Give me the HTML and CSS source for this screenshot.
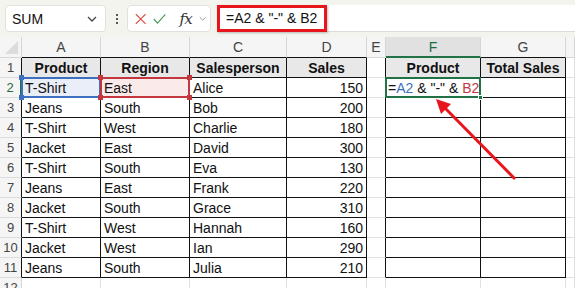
FILE: index.html
```html
<!DOCTYPE html>
<html lang="en">
<head>
    <meta charset="UTF-8">
    <title>Concatenate in Excel</title>
    <link rel="stylesheet" href="styles.css">
</head>
<body>
    <div class="ribbon">
        <div class="namebox">
            <span>SUM</span>
            <svg width="10" height="6" viewBox="0 0 10 6"><path d="M1 1 L5 5 L9 1" fill="none" stroke="#444" stroke-width="1.3"/></svg>
        </div>
        <div class="dots"><i></i><i></i><i></i></div>
        <div class="fnbox">
            <svg width="14" height="14" viewBox="0 0 14 14"><path d="M1 1 L13 13 M13 1 L1 13" stroke="#d9453c" stroke-width="1.4"/></svg>
            <svg width="16" height="14" viewBox="0 0 16 14"><path d="M1 7 L5.5 12 L15 1.5" fill="none" stroke="#4c9a5a" stroke-width="1.4"/></svg>
            <span class="fx">fx</span>
            <svg width="9" height="6" viewBox="0 0 9 6"><path d="M1 1 L4.5 4.5 L8 1" fill="none" stroke="#999" stroke-width="1.2"/></svg>
        </div>
        <div class="formula">
            <span class="mark">=A2 &amp; "-" &amp; B2</span>
        </div>
    </div>

    <table class="grid">
        <colgroup>
            <col style="width:22px"><col style="width:79px"><col style="width:89px"><col style="width:97px">
            <col style="width:80px"><col style="width:19px"><col style="width:95px"><col style="width:85px"><col>
        </colgroup>
        <tr class="letters">
            <th class="corner"><span></span></th>
            <th class="top">A</th><th class="top">B</th><th class="top">C</th><th class="top">D</th>
            <th>E</th><th class="top active">F</th><th class="top">G</th><th></th>
        </tr>
        <tr>
            <th class="rh">1</th>
            <td class="t hd">Product</td><td class="t hd">Region</td><td class="t hd">Salesperson</td><td class="t hd">Sales</td>
            <td class="e"></td><td class="t hd">Product</td><td class="t hd">Total Sales</td><td></td>
        </tr>
        <tr>
            <th class="rh sel">2</th>
            <td class="t refa"><b class="h tl"></b><b class="h bl"></b>T-Shirt</td>
            <td class="t refb"><b class="h tl"></b><b class="h tr"></b><b class="h bl"></b><b class="h br"></b>East</td>
            <td class="t">Alice</td><td class="t n">150</td>
            <td class="e"></td>
            <td class="t edit">=<span class="ra">A2</span> &amp; "-" &amp; <span class="rb">B2</span><b class="fill"></b></td>
            <td class="t"></td><td></td>
        </tr>
        <tr>
            <th class="rh">3</th>
            <td class="t">Jeans</td><td class="t">South</td><td class="t">Bob</td><td class="t n">200</td>
            <td class="e"></td><td class="t"></td><td class="t"></td><td></td>
        </tr>
        <tr>
            <th class="rh">4</th>
            <td class="t">T-Shirt</td><td class="t">West</td><td class="t">Charlie</td><td class="t n">180</td>
            <td class="e"></td><td class="t"></td><td class="t"></td><td></td>
        </tr>
        <tr>
            <th class="rh">5</th>
            <td class="t">Jacket</td><td class="t">East</td><td class="t">David</td><td class="t n">300</td>
            <td class="e"></td><td class="t"></td><td class="t"></td><td></td>
        </tr>
        <tr>
            <th class="rh">6</th>
            <td class="t">T-Shirt</td><td class="t">South</td><td class="t">Eva</td><td class="t n">130</td>
            <td class="e"></td><td class="t"></td><td class="t"></td><td></td>
        </tr>
        <tr>
            <th class="rh">7</th>
            <td class="t">Jeans</td><td class="t">East</td><td class="t">Frank</td><td class="t n">220</td>
            <td class="e"></td><td class="t"></td><td class="t"></td><td></td>
        </tr>
        <tr>
            <th class="rh">8</th>
            <td class="t">Jacket</td><td class="t">South</td><td class="t">Grace</td><td class="t n">310</td>
            <td class="e"></td><td class="t"></td><td class="t"></td><td></td>
        </tr>
        <tr>
            <th class="rh">9</th>
            <td class="t">T-Shirt</td><td class="t">West</td><td class="t">Hannah</td><td class="t n">160</td>
            <td class="e"></td><td class="t"></td><td class="t"></td><td></td>
        </tr>
        <tr>
            <th class="rh">10</th>
            <td class="t">Jacket</td><td class="t">West</td><td class="t">Ian</td><td class="t n">290</td>
            <td class="e"></td><td class="t"></td><td class="t"></td><td></td>
        </tr>
        <tr>
            <th class="rh">11</th>
            <td class="t">Jeans</td><td class="t">South</td><td class="t">Julia</td><td class="t n">210</td>
            <td class="e"></td><td class="t"></td><td class="t"></td><td></td>
        </tr>
        <tr>
            <th class="rh last">12</th>
            <td></td><td></td><td></td><td></td><td></td><td></td><td></td><td></td>
        </tr>
    </table>

    <svg class="arrow" width="575" height="288" viewBox="0 0 575 288">
        <line x1="515" y1="179" x2="444" y2="107" stroke="#e8161c" stroke-width="3"/>
        <polygon points="436,99 451,104 441,114" fill="#e8161c"/>
    </svg>
</body>
</html>
```

FILE: styles.css
```css
* {
    box-sizing: border-box;
}

body {
    margin: 0;
    width: 575px;
    height: 288px;
    overflow: hidden;
    position: relative;
    background: #fff;
    font-family: "Liberation Sans", Arial, sans-serif;
    font-size: 14px;
    color: #111;
}

.ribbon {
    height: 37px;
    background: #f4f4ee;
    display: flex;
    align-items: flex-start;
    padding: 5px 0 0 5px;
}

.namebox {
    width: 101px;
    height: 27px;
    background: #fff;
    border: 1px solid #e2e2dc;
    border-radius: 4px;
    display: flex;
    align-items: center;
    justify-content: space-between;
    padding: 0 8px 0 6px;
    font-size: 14px;
}

.dots {
    width: 21px;
    height: 27px;
    display: flex;
    flex-direction: column;
    align-items: center;
    justify-content: center;
    gap: 2px;
}

.dots i {
    width: 2px;
    height: 2px;
    background: #555;
}

.fnbox {
    width: 84px;
    height: 27px;
    background: #fff;
    border: 1px solid #e2e2dc;
    border-radius: 4px;
    display: flex;
    align-items: center;
    gap: 7px;
    padding: 0 4px 0 7px;
}

.fx {
    font-family: "DejaVu Serif", "Liberation Serif", serif;
    font-style: italic;
    font-size: 15px;
    color: #333;
    margin-left: 6px;
    letter-spacing: -1px;
}

.formula {
    flex: 1;
    height: 27px;
    margin-left: 6px;
    background: #fff;
    border-bottom: 1px solid #dcdcd6;
    display: flex;
    align-items: center;
}

.mark {
    height: 27px;
    padding: 0 7px 0 6px;
    border: 3px solid #e8161c;
    display: flex;
    align-items: center;
    box-shadow: 1px 1px 2px rgba(0, 0, 0, 0.25);
}

.grid {
    width: 575px;
    table-layout: fixed;
    border-collapse: separate;
    border-spacing: 0;
}

.grid th,
.grid td {
    height: 20px;
    padding: 0 3px;
    border-right: 1px solid #e1e1e1;
    border-bottom: 1px solid #e1e1e1;
    white-space: nowrap;
    overflow: visible;
    line-height: 18px;
}

.letters th {
    height: 21px;
    background: #f5f5f5;
    font-weight: normal;
    color: #444;
    text-align: center;
    border-right-color: #d6d6d6;
    border-bottom-color: #d6d6d6;
}

.letters th.top {
    border-bottom-color: #111;
}

.letters th.active {
    background: #e1e1e1;
    color: #1e6b3d;
    border-bottom: 2px solid #217346;
}

.corner {
    position: relative;
}

.corner span {
    position: absolute;
    right: 3px;
    bottom: 3px;
    width: 0;
    height: 0;
    border-left: 13px solid transparent;
    border-bottom: 13px solid #dcdcdc;
}

.rh {
    background: #f5f5f5;
    font-weight: normal;
    font-size: 13px;
    color: #444;
    text-align: center;
    padding: 0 !important;
}

.grid .rh {
    border-right-color: #111;
    border-bottom-color: #dcdcdc;
}

.grid .rh.sel {
    color: #1e6b3d;
    border-right: 2px solid #217346;
}

.grid .rh.last {
    border-right-color: #d6d6d6;
}

.grid td.t {
    border-right-color: #111;
    border-bottom-color: #111;
}

.grid td.e {
    border-right-color: #111;
}

.hd {
    background: #e8e8e8;
    font-weight: bold;
    text-align: center;
}

.n {
    text-align: right;
}

.refa,
.refb,
.edit {
    position: relative;
}

.refa {
    background: #e9eef8;
}

.refb {
    background: #fbeaea;
}

.refa::after,
.refb::after,
.edit::after {
    content: "";
    position: absolute;
    left: -1px;
    top: -1px;
    right: -1px;
    bottom: -1px;
    border: 2px solid #3e70c0;
    pointer-events: none;
}

.refb::after {
    border-color: #c2383e;
}

.edit::after {
    border-color: #217346;
}

.h {
    position: absolute;
    width: 5px;
    height: 5px;
    z-index: 2;
    background: #3e70c0;
}

.refb .h {
    background: #c2383e;
}

.tl { left: -3px; top: -3px; }
.tr { right: -3px; top: -3px; }
.bl { left: -3px; bottom: -3px; }
.br { right: -3px; bottom: -3px; }

.edit {
    padding-left: 2px !important;
    font-size: 14px;
}

.ra {
    color: #3e70c0;
}

.rb {
    color: #c2383e;
}

.fill {
    position: absolute;
    right: -3px;
    bottom: -3px;
    width: 5px;
    height: 5px;
    background: #217346;
    border: 1px solid #fff;
    z-index: 2;
}

.arrow {
    position: absolute;
    left: 0;
    top: 0;
    pointer-events: none;
}
```
